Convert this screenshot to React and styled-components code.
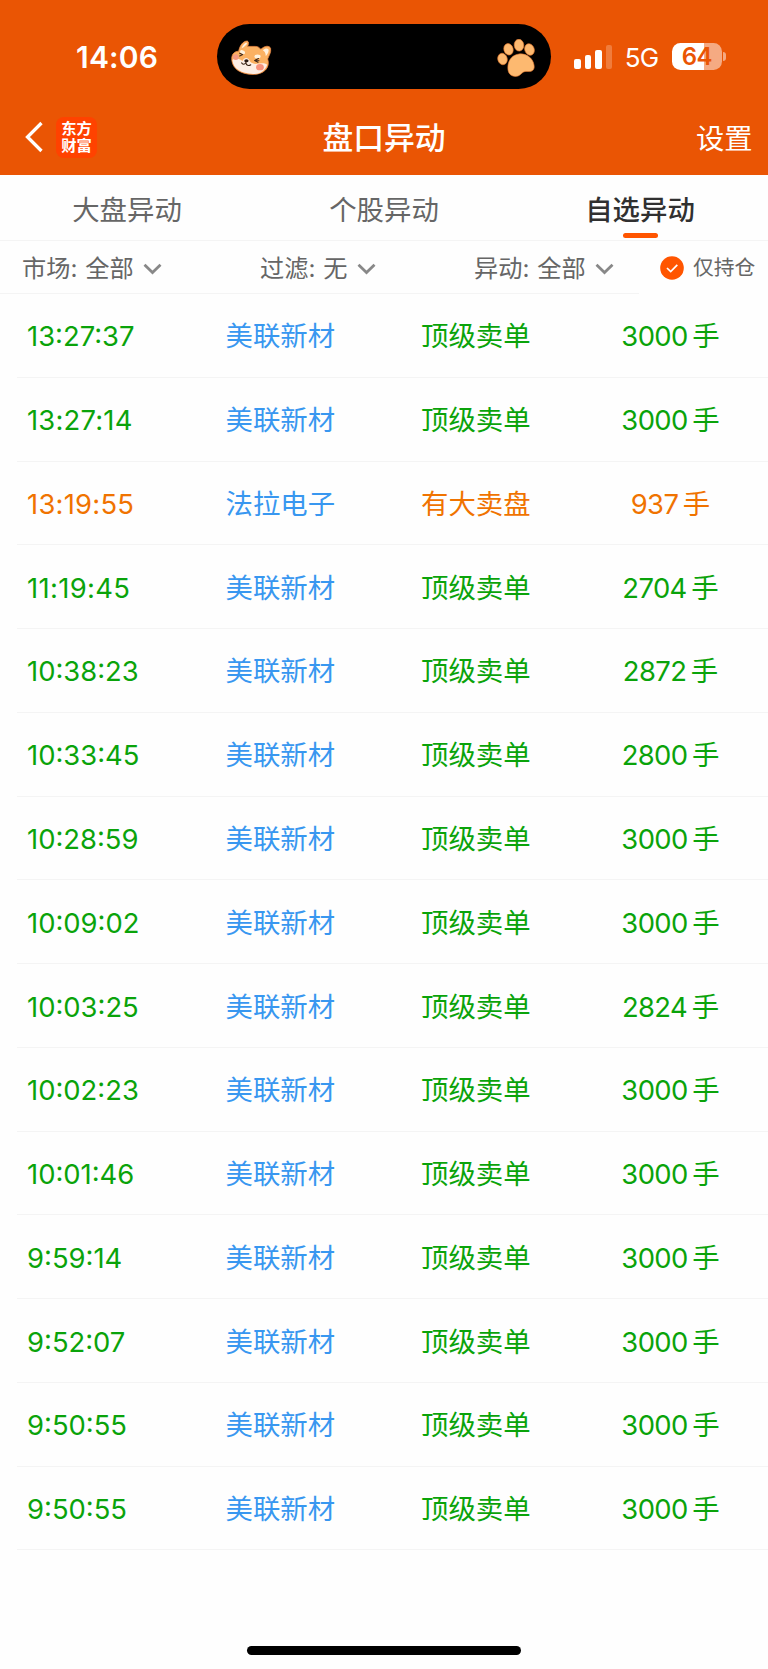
import React from "react";
import styled, { createGlobalStyle } from "styled-components";

const GlobalStyle = createGlobalStyle`
  * { box-sizing: border-box; }
  body {
    margin: 0;
    background: #fefefe;
    font-family: Inter, "Noto Sans CJK SC", sans-serif;
  }
`;

const Screen = styled.div`
  display: flex;
  flex-direction: column;
  width: 768px;
  height: 1669px;
  overflow: hidden;
  background: #fefefe;
`;

const Header = styled.header`
  height: 175px;
  flex: none;
  background: #ea5504;
  color: #fff;
`;

const StatusBar = styled.div`
  display: flex;
  align-items: center;
  height: 113px;
`;

const Clock = styled.div`
  width: 217px;
  padding-left: 76px;
  font-size: 30px;
  font-weight: 600;
  line-height: 40px;
  letter-spacing: 0.2px;
`;

const Island = styled.div`
  display: flex;
  align-items: center;
  justify-content: space-between;
  width: 334px;
  height: 65px;
  padding: 2px 16px 0 13px;
  border-radius: 33px;
  background: #000;
`;

const Signal = styled.div`
  display: flex;
  align-items: flex-end;
  gap: 4px;
  height: 24px;
  margin: 0 0 0 23px;
`;

const SignalBar = styled.div`
  width: 6.6px;
  height: ${(p) => p.$h}px;
  border-radius: 2px;
  background: ${(p) => (p.$dim ? "#f07c3c" : "#fff")};
`;

const Network = styled.div`
  width: 34px;
  margin-left: 12.4px;
  font-size: 26px;
  line-height: 32px;
  padding-top: 3px;
  letter-spacing: -0.8px;
`;

const Battery = styled.div`
  display: flex;
  align-items: center;
  justify-content: center;
  width: 50px;
  height: 27px;
  margin-left: 13px;
  border-radius: 8.5px;
  background: linear-gradient(90deg, #fff 0 63.5%, #f5aa82 63.5%);
  color: #ea5504;
  font-size: 24px;
  font-weight: 600;
  line-height: 27px;
  letter-spacing: -0.6px;
`;

const BatteryTip = styled.div`
  width: 3px;
  height: 9px;
  margin-left: 1.5px;
  border-radius: 0 4px 4px 0;
  background: #f5aa82;
`;

const NavBar = styled.div`
  display: grid;
  grid-template-columns: 200px 1fr 200px;
  align-items: center;
  height: 48px;
`;

const NavLeft = styled.div`
  display: flex;
  align-items: center;
  gap: 13px;
  padding-left: 25px;
`;

const Logo = styled.div`
  display: flex;
  flex-direction: column;
  align-items: center;
  width: 41px;
  height: 41px;
  padding-top: 2px;
  border-radius: 8px;
  background: #ff4200;
  font-family: "Noto Sans CJK SC", sans-serif;
  font-size: 15.3px;
  font-weight: 700;
  line-height: 17.2px;
`;

const Title = styled.h1`
  margin: 0;
  padding-top: 2px;
  font-size: 30.8px;
  font-weight: 500;
  line-height: 40px;
  text-align: center;
`;

const Settings = styled.div`
  padding: 3px 15.5px 0 0;
  font-size: 28.3px;
  line-height: 40px;
  text-align: right;
`;

const Tabs = styled.nav`
  display: grid;
  grid-template-columns: repeat(3, 1fr);
  flex: none;
  height: 66px;
  border-bottom: 1px solid #f4f4f4;
`;

const Tab = styled.div`
  display: flex;
  flex-direction: column;
  align-items: center;
  gap: 3px;
  padding-top: 15px;
  padding-right: ${(p) => (p.$first ? 2 : 0)}px;
  font-size: 27.4px;
  line-height: 40px;
  font-weight: ${(p) => (p.$active ? 500 : 400)};
  color: ${(p) => (p.$active ? "#303030" : "#666")};
`;

const Underline = styled.div`
  width: 35px;
  height: 5px;
  border-radius: 2.5px;
  background: #ff5500;
`;

const FilterBar = styled.div`
  display: flex;
  flex: none;
  height: 53px;
`;

const Filters = styled.div`
  display: grid;
  grid-template-columns: 238px 214px 1fr;
  align-items: center;
  width: 639px;
  padding: 4px 0 0 22px;
  border-bottom: 1px solid #f4f4f4;
`;

const Filter = styled.div`
  display: flex;
  align-items: center;
  color: #666;
  font-size: 24.2px;
  line-height: 36px;
`;

const FilterValue = styled.span`
  margin: 0 9px 0 8px;
`;

const HoldOnly = styled.div`
  display: flex;
  align-items: center;
  gap: 9px;
  padding: 1px 0 0 21px;
  color: #666;
  font-size: 20.8px;
  line-height: 36px;
`;

const List = styled.main`
  display: flex;
  flex-direction: column;
  flex: none;
  padding-left: 17px;
`;

const Row = styled.div`
  display: grid;
  grid-template-columns: 198.5px 195.5px 160px 1fr;
  align-items: center;
  height: 83.78px;
  padding: 2px 0 0 10px;
  border-bottom: 1px solid #f4f4f4;
  color: ${(p) => (p.$warn ? "#f07300" : "#0aa30a")};
  font-size: 27.4px;
  line-height: 40px;
`;

const Time = styled.div`
  letter-spacing: ${(p) => p.$spacing}px;
`;

const Stock = styled.div`
  color: #3897f0;
`;

const Kind = styled.div``;

const Amount = styled.div`
  display: flex;
  justify-content: center;
  gap: 4.5px;
  padding-right: 8px;
`;

const Count = styled.span`
  letter-spacing: -0.6px;
`;

const HomeArea = styled.footer`
  display: flex;
  align-items: flex-end;
  justify-content: center;
  flex: 1;
  padding-bottom: 14.5px;
`;

const HomeIndicator = styled.div`
  width: 274px;
  height: 9px;
  border-radius: 5px;
  background: #000;
`;

const Dog = () => (
  <svg width="42.500" height="38" viewBox="0 0 44 38">
    <path d="M9 12C10 6 14 1 18 1.500C20 2 19 6 18 7L26 7C29 7 30 8 32 10C36 6 41 6 42 9C43 13 40 17 39 20C42 29 35 36 24 36C11 36 3 30 2 22C1 16 4 12 9 12Z" fill="#fbb162" stroke="#f08a45" strokeWidth="0.8" />
    <path d="M12 9C13 5 16 3 17.500 3.200C18 5 15 7 12 9ZM34 11C37 8 40 9 40 11C40 14 38 16 37 17C37 14 36 12 34 11Z" fill="#fff0dd" />
    <path d="M2.500 21C6 18 10 20 13 22C15 18 19 18 21 23C26 28 33 22 38.500 26C36 33 30 36 24 35.500C12 35 3 30 2.500 21Z" fill="#fdeee5" />
    <ellipse cx="13" cy="13" rx="2.800" ry="1.900" fill="#fff2dd" transform="rotate(25 13 13)" />
    <ellipse cx="28.500" cy="17.500" rx="3.200" ry="2" fill="#fff2dd" />
    <circle cx="6" cy="18" r="3" fill="#f59a82" />
    <ellipse cx="31" cy="28.500" rx="4" ry="3.300" fill="#f7927c" />
    <g fill="none" stroke="#3a2418" strokeWidth="1.100" strokeLinecap="round" strokeLinejoin="round">
      <path d="M10 14L13.200 15.500L10 17" />
      <path d="M29.500 19.500L25.500 21.500L29 23.500M25.500 21.500L30 21.800" />
      <path d="M16.500 23.500C15.500 26 13.500 26 12 24M16.500 23.500C16.500 27 19.500 27.500 21.500 26" />
    </g>
    <ellipse cx="17" cy="21.800" rx="2.200" ry="1.600" fill="#2b1a14" />
  </svg>
);

const Paw = () => (
  <svg width="38" height="38" viewBox="0 0 38 38">
    <g fill="#fdb970" stroke="#e87b30" strokeWidth="0.6">
      <ellipse cx="5.500" cy="20" rx="4.700" ry="5.800" transform="rotate(-15 5.500 20)" />
      <ellipse cx="11.500" cy="10.300" rx="4.600" ry="5.800" transform="rotate(-15 11.500 10.300)" />
      <ellipse cx="22" cy="6.200" rx="4.800" ry="5.900" transform="rotate(-5 22 6.200)" />
      <ellipse cx="32.500" cy="10.500" rx="4.700" ry="5.900" transform="rotate(-20 32.500 10.500)" />
      <path d="M22 15C29 14 36 19 37 26C38 31 35 33 31 32.500C27 32 26 33 23.500 35.500C20 39 12 38 11 31C10 23 14 16 22 15Z" />
    </g>
  </svg>
);

const BackIcon = () => (
  <svg width="18" height="32" viewBox="0 0 18 32">
    <path d="M16.500 2L2.500 16L16.500 30" fill="none" stroke="#fff" strokeWidth="3.300" />
  </svg>
);

const Chevron = () => (
  <svg width="19" height="12" viewBox="0 0 19 12">
    <path d="M1.500 1.800L9.500 9.500L17.500 1.800" fill="none" stroke="#888" strokeWidth="2.800" />
  </svg>
);

const CheckIcon = () => (
  <svg width="24" height="24" viewBox="0 0 24 24">
    <circle cx="12" cy="12" r="11.800" fill="#ff5500" />
    <path d="M7 12L10.700 15.500L17.300 8.800" fill="none" stroke="#fff" strokeWidth="1.700" />
  </svg>
);

const filters = [
  ["市场:", "全部"],
  ["过滤:", "无"],
  ["异动:", "全部"],
];

const records = [
  { time: "13:27:37", amount: 3000 },
  { time: "13:27:14", amount: 3000, spacing: 0.2 },
  { time: "13:19:55", amount: 937, stock: "法拉电子", kind: "有大卖盘", spacing: 0.25 },
  { time: "11:19:45", amount: 2704, spacing: 0.35 },
  { time: "10:38:23", amount: 2872 },
  { time: "10:33:45", amount: 2800 },
  { time: "10:28:59", amount: 3000 },
  { time: "10:09:02", amount: 3000 },
  { time: "10:03:25", amount: 2824 },
  { time: "10:02:23", amount: 3000 },
  { time: "10:01:46", amount: 3000 },
  { time: "9:59:14", amount: 3000 },
  { time: "9:52:07", amount: 3000 },
  { time: "9:50:55", amount: 3000 },
  { time: "9:50:55", amount: 3000 },
];

export default function App() {
  return (
    <Screen>
      <GlobalStyle />
      <Header>
        <StatusBar>
          <Clock>14:06</Clock>
          <Island>
            <Dog />
            <Paw />
          </Island>
          <Signal>
            <SignalBar $h={9.5} />
            <SignalBar $h={13.5} />
            <SignalBar $h={18.5} />
            <SignalBar $h={24} $dim />
          </Signal>
          <Network>5G</Network>
          <Battery>64</Battery>
          <BatteryTip />
        </StatusBar>
        <NavBar>
          <NavLeft>
            <BackIcon />
            <Logo>
              <span>东方</span>
              <span>财富</span>
            </Logo>
          </NavLeft>
          <Title>盘口异动</Title>
          <Settings>设置</Settings>
        </NavBar>
      </Header>
      <Tabs>
        <Tab $first>大盘异动</Tab>
        <Tab>个股异动</Tab>
        <Tab $active>
          自选异动
          <Underline />
        </Tab>
      </Tabs>
      <FilterBar>
        <Filters>
          {filters.map(([label, value]) => (
            <Filter key={label}>
              <span>{label}</span>
              <FilterValue>{value}</FilterValue>
              <Chevron />
            </Filter>
          ))}
        </Filters>
        <HoldOnly>
          <CheckIcon />
          <span>仅持仓</span>
        </HoldOnly>
      </FilterBar>
      <List>
        {records.map(({ time, amount, stock = "美联新材", kind = "顶级卖单", spacing = 0 }, i) => (
          <Row key={i} $warn={amount < 1000}>
            <Time $spacing={spacing}>{time}</Time>
            <Stock>{stock}</Stock>
            <Kind>{kind}</Kind>
            <Amount>
              <Count>{amount}</Count>
              <span>手</span>
            </Amount>
          </Row>
        ))}
      </List>
      <HomeArea>
        <HomeIndicator />
      </HomeArea>
    </Screen>
  );
}
